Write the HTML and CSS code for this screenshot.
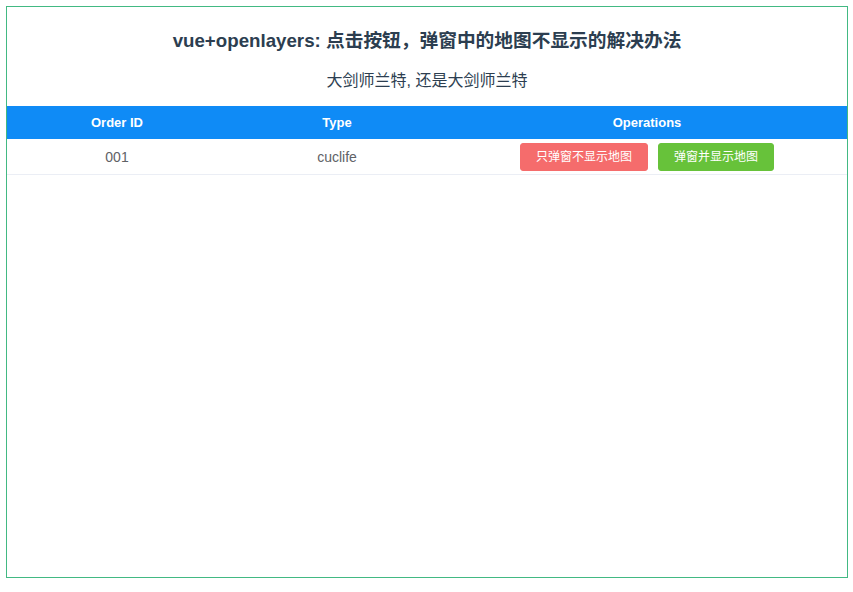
FILE: index.html
```html
<!DOCTYPE html>
<html lang="zh-CN">
<head>
<meta charset="utf-8">
<title>vue+openlayers</title>
<link rel="stylesheet" href="styles.css">
</head>
<body>
<div class="app">
  <h3 class="title">vue+openlayers: 点击按钮，弹窗中的地图不显示的解决办法</h3>
  <h4 class="subtitle">大剑师兰特, 还是大剑师兰特</h4>
  <table class="grid">
    <colgroup>
      <col class="c1">
      <col class="c2">
      <col class="c3">
    </colgroup>
    <thead>
      <tr>
        <th>Order ID</th>
        <th>Type</th>
        <th>Operations</th>
      </tr>
    </thead>
    <tbody>
      <tr>
        <td>001</td>
        <td>cuclife</td>
        <td>
          <div class="ops">
            <button class="btn btn-danger">只弹窗不显示地图</button>
            <button class="btn btn-success">弹窗并显示地图</button>
          </div>
        </td>
      </tr>
    </tbody>
  </table>
</div>
</body>
</html>
```

FILE: styles.css
```css
html, body {
  margin: 0;
  padding: 0;
  background: #ffffff;
}

body {
  font-family: "Liberation Sans", Arial, "Noto Sans CJK SC", sans-serif;
  color: #2c3e50;
}

.app {
  margin: 6px 0 0 6px;
  width: 840px;
  height: 570px;
  border: 1px solid #42b983;
  overflow: hidden;
}

.title {
  margin: 22px 0 0 0;
  font-size: 18.72px;
  line-height: 24px;
  font-weight: bold;
  text-align: center;
  color: #2c3e50;
}

.subtitle {
  margin: 17px 0 0 0;
  font-size: 16px;
  line-height: 22px;
  font-weight: normal;
  text-align: center;
  color: #2c3e50;
}

.grid {
  margin-top: 14px;
  width: 100%;
  border-collapse: collapse;
  table-layout: fixed;
  font-size: 14px;
}

.c1 { width: 220px; }
.c2 { width: 220px; }

.grid th {
  background: #0f8bf6;
  color: #ffffff;
  font-size: 13px;
  font-weight: bold;
  height: 33px;
  padding: 0;
  text-align: center;
  vertical-align: middle;
}

.grid td {
  color: #606266;
  height: 35px;
  padding: 0;
  text-align: center;
  vertical-align: middle;
  border-bottom: 1px solid #ebeef5;
}

.ops {
  display: flex;
  justify-content: center;
  gap: 10px;
}

.btn {
  font-family: "Liberation Sans", Arial, "Noto Sans CJK SC", sans-serif;
  font-size: 12px;
  line-height: 12px;
  padding: 7px 15px;
  border-radius: 3px;
  color: #ffffff;
  cursor: pointer;
  margin: 0;
}

.btn-danger {
  background: #f56c6c;
  border: 1px solid #f56c6c;
}

.btn-success {
  background: #67c23a;
  border: 1px solid #67c23a;
}
```
